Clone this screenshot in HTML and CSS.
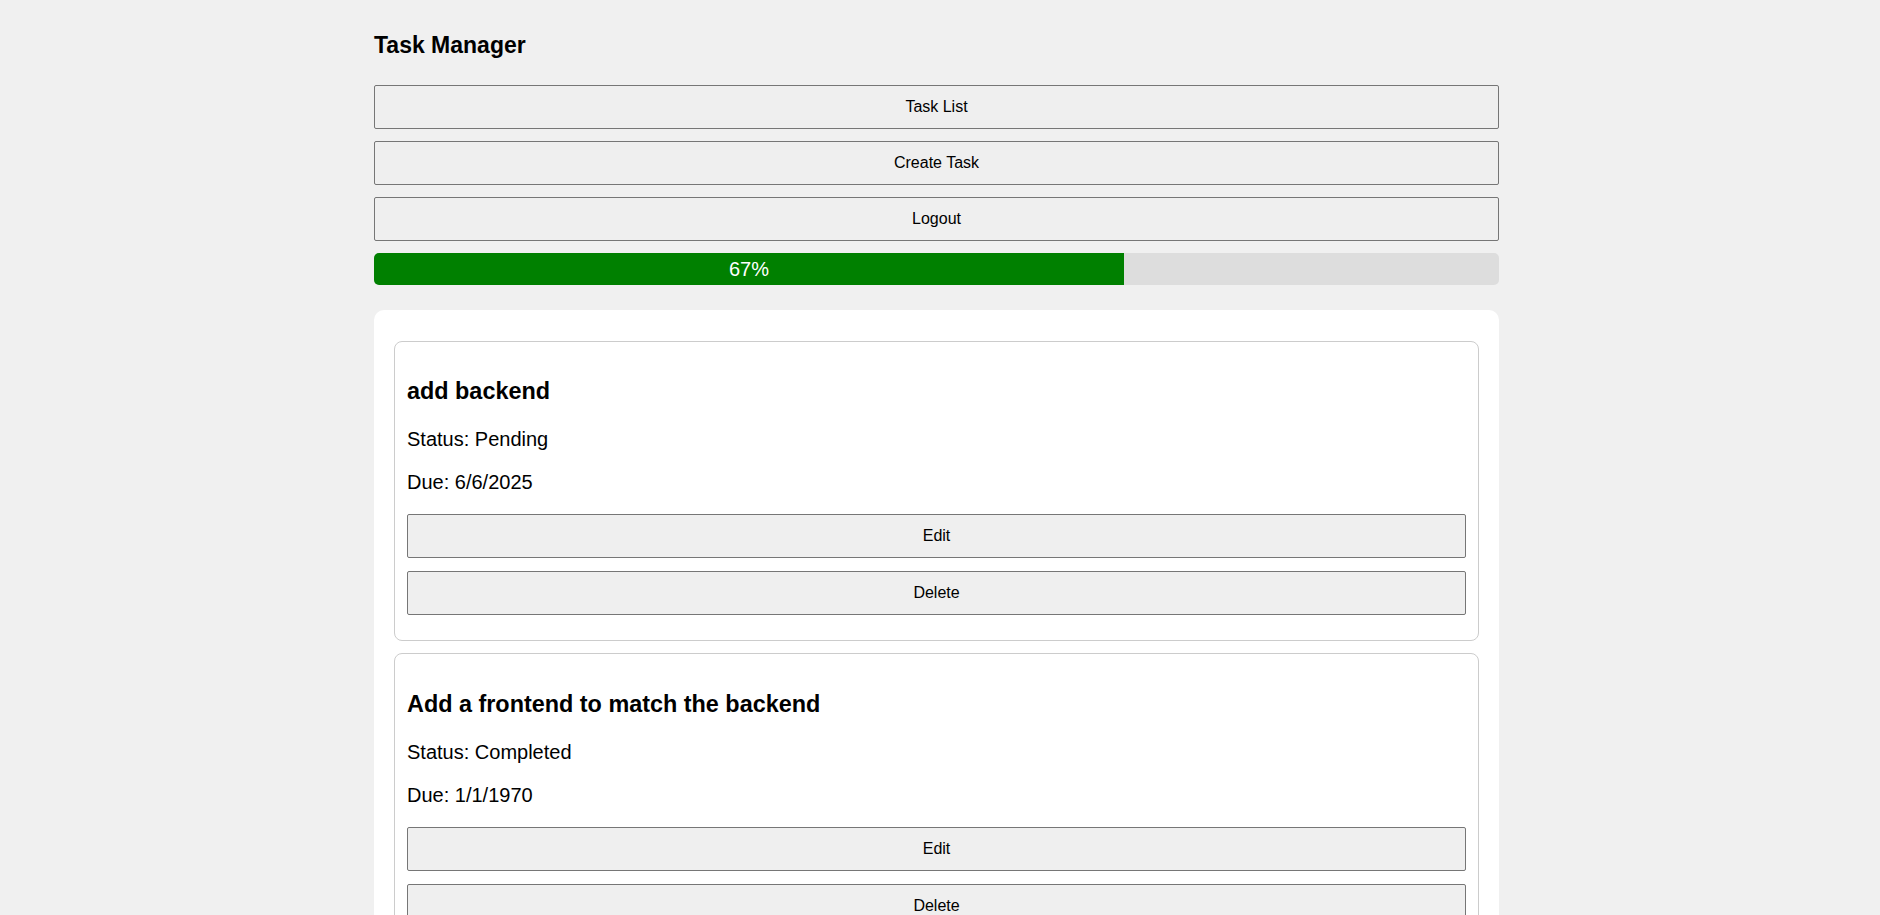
FILE: index.html
```html
<!DOCTYPE html>
<html lang="en">
<head>
<meta charset="utf-8">
<title>Task Manager</title>
<link rel="stylesheet" href="styles.css">
</head>
<body>
<div class="app">
  <h1 class="app-title">Task Manager</h1>
  <nav class="nav">
    <button class="btn">Task List</button>
    <button class="btn">Create Task</button>
    <button class="btn">Logout</button>
  </nav>
  <div class="progress">
    <div class="progress-fill" style="width: 66.67%">67%</div>
  </div>
  <main class="panel">
    <div class="card">
      <h3 class="card-title">add backend</h3>
      <p class="card-text">Status: Pending</p>
      <p class="card-text">Due: 6/6/2025</p>
      <div class="card-actions">
        <button class="btn">Edit</button>
        <button class="btn">Delete</button>
      </div>
    </div>
    <div class="card">
      <h3 class="card-title">Add a frontend to match the backend</h3>
      <p class="card-text">Status: Completed</p>
      <p class="card-text">Due: 1/1/1970</p>
      <div class="card-actions">
        <button class="btn">Edit</button>
        <button class="btn">Delete</button>
      </div>
    </div>
  </main>
</div>
</body>
</html>
```

FILE: styles.css
```css
html, body {
  margin: 0;
  padding: 0;
  background: #f0f0f0;
  font-family: "Liberation Sans", Arial, sans-serif;
  color: #000;
}

.app {
  width: 1125px;
  margin: 0 0 0 374px;
  padding-top: 32px;
  padding-bottom: 40px;
}

.app-title {
  margin: 0 0 25.5px;
  font-size: 23px;
  font-weight: bold;
  line-height: normal;
}

.nav {
  display: flex;
  flex-direction: column;
  gap: 12px;
}

.btn {
  display: block;
  width: 100%;
  box-sizing: border-box;
  padding: 12px 10px;
  font-family: "Liberation Sans", Arial, sans-serif;
  font-size: 16px;
  line-height: normal;
  color: #000;
  background: #efefef;
  border: 1px solid #767676;
  border-radius: 2px;
  text-align: center;
}

.progress {
  margin-top: 12px;
  height: 32px;
  background: #ddd;
  border-radius: 5px;
  overflow: hidden;
}

.progress-fill {
  height: 100%;
  background: #008000;
  color: #fff;
  font-size: 20px;
  line-height: 32px;
  text-align: center;
}

.panel {
  display: block;
  margin-top: 25px;
  background: #fff;
  border-radius: 10px;
  padding: 21px 20px 20px;
}

.card {
  border: 1px solid #ccc;
  border-radius: 8px;
  padding: 13px 12px;
  margin: 10px 0 12px;
  background: #fff;
}

.card-title {
  margin: 23.4px 0;
  font-size: 23.4px;
  font-weight: bold;
  line-height: normal;
}

.card-text {
  margin: 20px 0;
  font-size: 20px;
  line-height: normal;
}

.card-actions {
  display: flex;
  flex-direction: column;
  gap: 13px;
  margin-bottom: 12px;
}
```
